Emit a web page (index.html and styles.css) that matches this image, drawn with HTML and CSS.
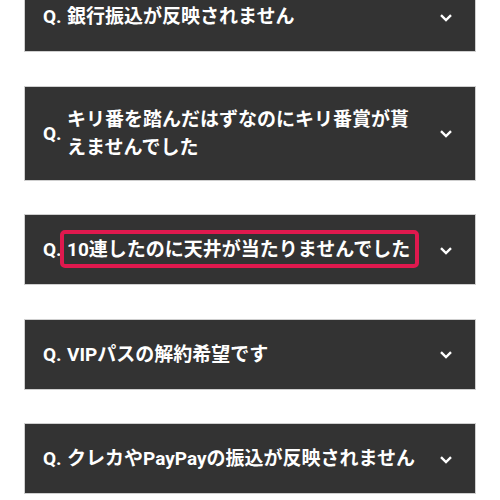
FILE: index.html
```html
<!DOCTYPE html>
<html lang="ja">
<head>
    <meta charset="UTF-8">
    <meta name="viewport" content="width=device-width, initial-scale=1.0">
    <title>よくある質問</title>
    <link rel="stylesheet" href="styles.css">
</head>
<body>
    <!-- FAQ list -->
    <div class="faq-list">
        <div class="faq-item">
            <span class="faq-q">Q.</span>
            <span class="faq-text">銀行振込が反映されません</span>
            <span class="faq-toggle"><svg width="12" height="8" viewBox="0 0 12 8"><polyline points="1,1.2 6,6 11,1.2"/></svg></span>
        </div>
        <div class="faq-item">
            <span class="faq-q">Q.</span>
            <span class="faq-text">キリ番を踏んだはずなのにキリ番賞が貰えませんでした</span>
            <span class="faq-toggle"><svg width="12" height="8" viewBox="0 0 12 8"><polyline points="1,1.2 6,6 11,1.2"/></svg></span>
        </div>
        <div class="faq-item">
            <span class="faq-q">Q.</span>
            <span class="faq-text"><span class="highlight">10連したのに天井が当たりませんでした</span></span>
            <span class="faq-toggle"><svg width="12" height="8" viewBox="0 0 12 8"><polyline points="1,1.2 6,6 11,1.2"/></svg></span>
        </div>
        <div class="faq-item">
            <span class="faq-q">Q.</span>
            <span class="faq-text">VIPパスの解約希望です</span>
            <span class="faq-toggle"><svg width="12" height="8" viewBox="0 0 12 8"><polyline points="1,1.2 6,6 11,1.2"/></svg></span>
        </div>
        <div class="faq-item">
            <span class="faq-q">Q.</span>
            <span class="faq-text">クレカやPayPayの振込が反映されません</span>
            <span class="faq-toggle"><svg width="12" height="8" viewBox="0 0 12 8"><polyline points="1,1.2 6,6 11,1.2"/></svg></span>
        </div>
    </div>
</body>
</html>
```

FILE: styles.css
```css
body {
    margin: 0;
    padding: 0;
    background-color: #fff;
    font-family: Roboto, "Noto Sans CJK JP", sans-serif;
}

.faq-list {
    display: flex;
    flex-direction: column;
    gap: 33.5px;
    margin-top: -19px; /* page is scrolled a little */
    padding: 0 24px;
}

.faq-item {
    display: flex;
    align-items: center;
    background-color: #333;
    border: 1px solid #cfcfcf;
    padding: 19px 23px 17px 18px;
    color: #fff;
    font-size: 19px;
    font-weight: bold;
    line-height: 28.5px;
}

.faq-q {
    flex: 0 0 24px;
}

.faq-text {
    flex: 1;
}

.faq-toggle {
    display: flex;
    align-items: center;
    height: 33px;
    margin-left: 16px;
}

.faq-toggle svg {
    display: block;
    fill: none;
    stroke: #fff;
    stroke-width: 2.4;
}

.highlight {
    position: relative;
}

/* red annotation frame drawn over the question */
.highlight::after {
    content: "";
    position: absolute;
    top: -8px;
    bottom: -7px;
    left: -7px;
    right: -9px;
    border: 4px solid #e0194e;
    border-radius: 5px;
}
```
